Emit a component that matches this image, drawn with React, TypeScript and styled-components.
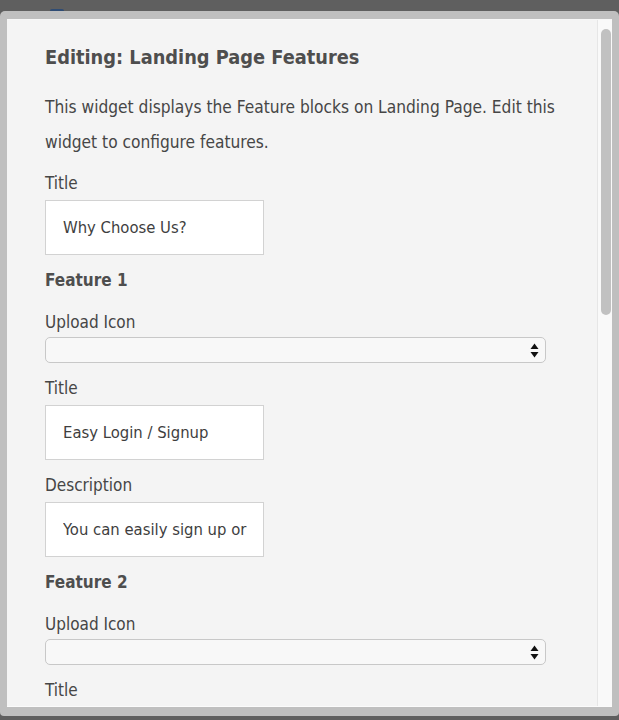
import React from "react";
import styled, { createGlobalStyle } from "styled-components";

const Global = createGlobalStyle`
  html, body { margin: 0; padding: 0; background: #5f5f5f; }
  * { box-sizing: border-box; }
`;

const Screen = styled.div`
  height: 720px;
  display: flex;
  flex-direction: column;
  overflow: hidden;
`;

const TopStrip = styled.div`
  height: 11px;
  display: flex;
  align-items: flex-end;
  padding-left: 50px;
`;

const HiddenIcon = styled.div`
  width: 14px;
  height: 2px;
  background: #2f4c74;
  border-radius: 2px 2px 0 0;
`;

const Frame = styled.div`
  height: 705px;
  background: #bfbfbf;
  border-radius: 5px 5px 4px 4px;
  padding: 8px 7px 9px 7px;
  display: flex;
`;

const Panel = styled.div`
  flex: 1;
  display: flex;
  background: #f4f4f4;
  border-bottom: 1px solid #fbfbfb;
  border-top: 1px solid #f7f7f7;
  overflow: hidden;
`;

const Content = styled.div`
  flex: 1;
  overflow: hidden;
  padding: 26px 38px 0 38px;
  font-family: "DejaVu Sans Condensed", "DejaVu Sans", sans-serif;
  color: #464646;
  font-size: 17px;
`;

const Heading = styled.h1`
  margin: 0 0 20px 0;
  font-size: 19.8px;
  line-height: 24px;
  font-weight: bold;
  color: #4e4e4e;
`;

const Intro = styled.p`
  margin: 0 0 11px 0;
  font-size: 17.2px;
  line-height: 35px;
`;

const Field = styled.div`
  margin-bottom: 13px;
`;

const Label = styled.label<{ $tight?: boolean }>`
  display: block;
  font-size: 17px;
  line-height: 24px;
  margin-bottom: ${(p) => (p.$tight ? "3px" : "5px")};
`;

const SectionTitle = styled.h2`
  margin: 0 0 18px 0;
  font-size: 17px;
  line-height: 24px;
  font-weight: bold;
  color: #4e4e4e;
`;

const TextInput = styled.input`
  display: block;
  width: 219px;
  height: 55px;
  padding: 0 0 0 17px;
  border: 1px solid #d2d2d2;
  background: #fff;
  font-family: inherit;
  font-size: 16.5px;
  color: #3e3e3e;
  outline: none;
`;

const SelectBox = styled.div`
  width: 501px;
  height: 26px;
  border: 1px solid #c8c8c8;
  border-radius: 5px;
  background: #f8f8f8;
  display: flex;
  align-items: center;
  justify-content: flex-end;
  padding-right: 6px;
`;

const ScrollTrack = styled.div`
  width: 15px;
  background: #f9f9f9;
  border-left: 1px solid #e6e6e6;
  padding: 9px 1px 0 3px;
`;

const ScrollThumb = styled.div`
  height: 286px;
  background: #c1c1c1;
  border-radius: 5px;
`;

const Arrows = () => (
  <svg width="9" height="15" viewBox="0 0 9 15">
    <path d="M4.5 0.5 L8.5 6 L0.5 6 Z" fill="#111" />
    <path d="M0.5 9 L8.5 9 L4.5 14.5 Z" fill="#111" />
  </svg>
);

const SelectField = ({ label }: { label: string }) => (
  <Field>
    <Label $tight>{label}</Label>
    <SelectBox>
      <Arrows />
    </SelectBox>
  </Field>
);

const InputField = ({ label, value }: { label: string; value?: string }) => (
  <Field>
    <Label>{label}</Label>
    <TextInput readOnly value={value ?? ""} />
  </Field>
);

export default function App() {
  return (
    <>
      <Global />
      <Screen>
        <TopStrip>
          <HiddenIcon />
        </TopStrip>
        <Frame>
          <Panel>
            <Content>
              <Heading>Editing: Landing Page Features</Heading>
              <Intro>
                This widget displays the Feature blocks on Landing Page. Edit this
                widget to configure features.
              </Intro>
              <InputField label="Title" value="Why Choose Us?" />
              <SectionTitle>Feature 1</SectionTitle>
              <SelectField label="Upload Icon" />
              <InputField label="Title" value="Easy Login / Signup" />
              <InputField label="Description" value="You can easily sign up or" />
              <SectionTitle>Feature 2</SectionTitle>
              <SelectField label="Upload Icon" />
              <InputField label="Title" value="" />
            </Content>
            <ScrollTrack>
              <ScrollThumb />
            </ScrollTrack>
          </Panel>
        </Frame>
      </Screen>
    </>
  );
}
